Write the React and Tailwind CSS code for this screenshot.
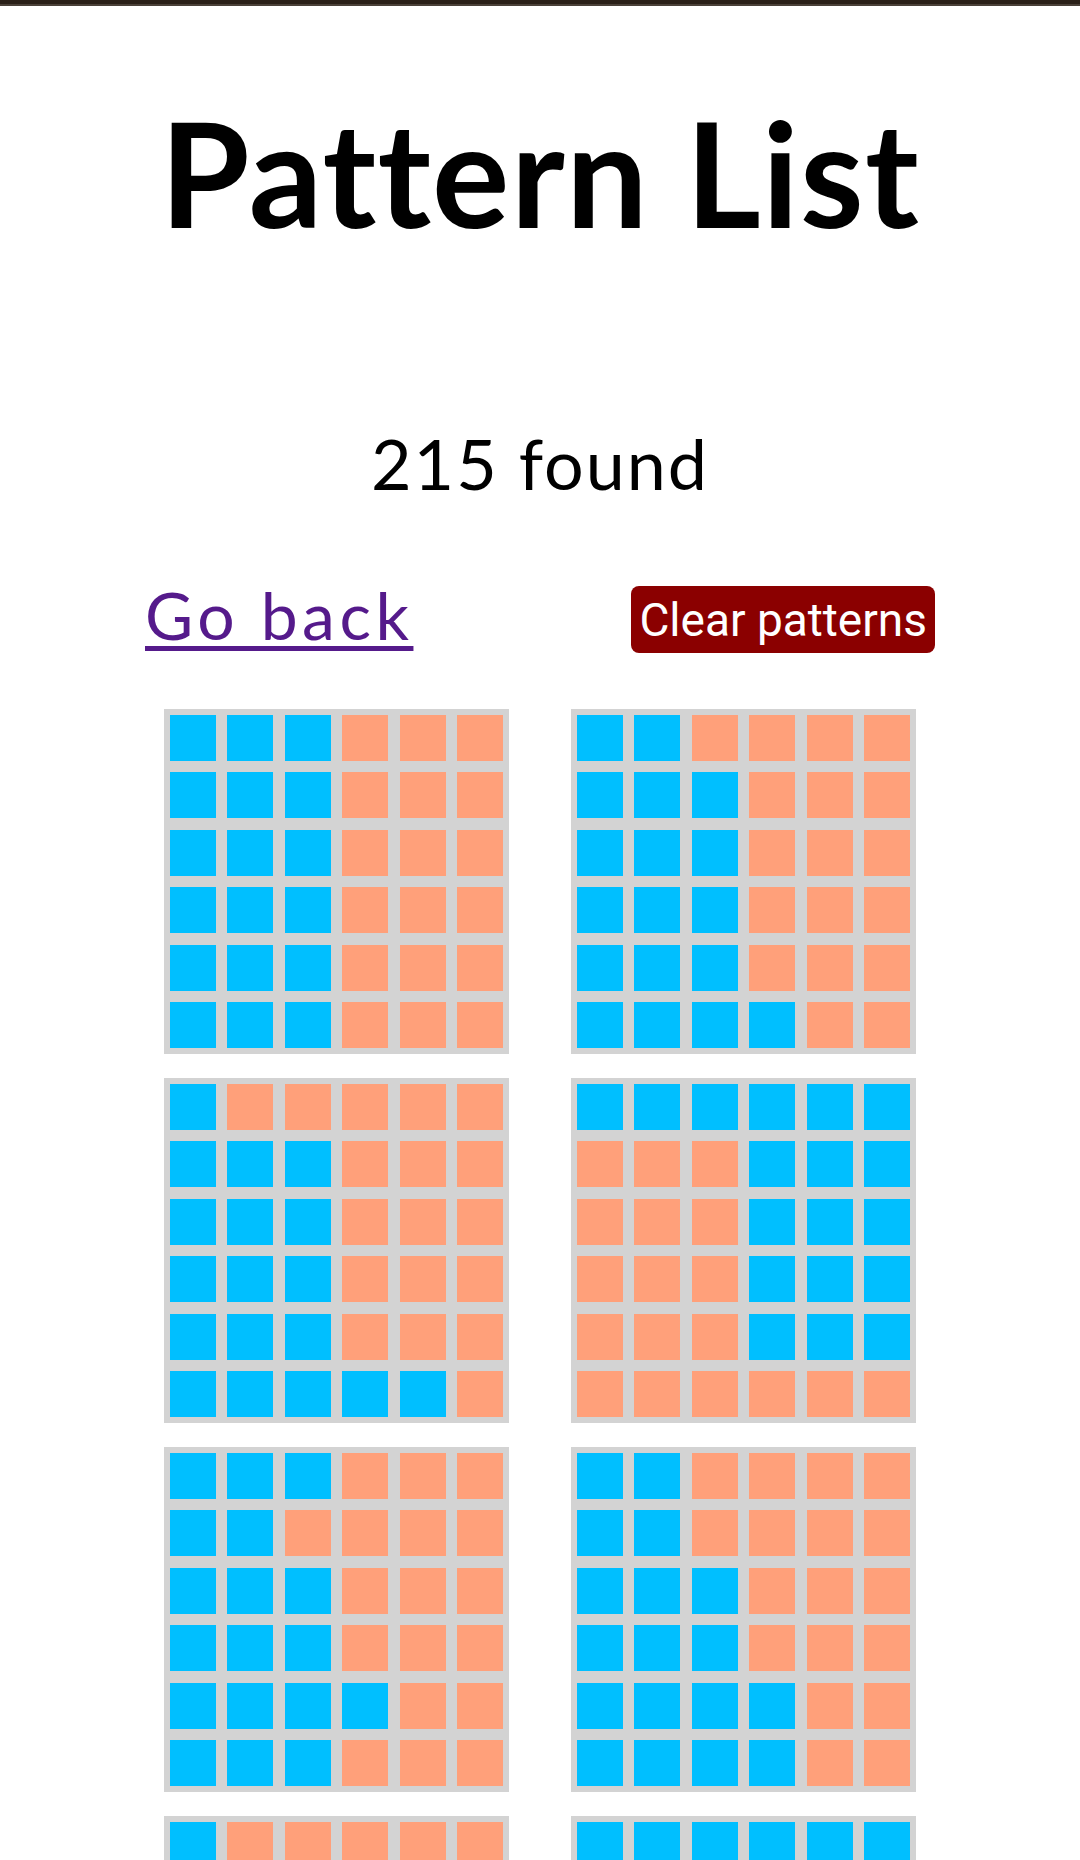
import React from "react";

const B = "bg-[#00bfff]";
const O = "bg-[#ffa07a]";

const patterns = [
  ["BBBOOO", "BBBOOO", "BBBOOO", "BBBOOO", "BBBOOO", "BBBOOO"],
  ["BBOOOO", "BBBOOO", "BBBOOO", "BBBOOO", "BBBOOO", "BBBBOO"],
  ["BOOOOO", "BBBOOO", "BBBOOO", "BBBOOO", "BBBOOO", "BBBBBO"],
  ["BBBBBB", "OOOBBB", "OOOBBB", "OOOBBB", "OOOBBB", "OOOOOO"],
  ["BBBOOO", "BBOOOO", "BBBOOO", "BBBOOO", "BBBBOO", "BBBOOO"],
  ["BBOOOO", "BBOOOO", "BBBOOO", "BBBOOO", "BBBBOO", "BBBBOO"],
  ["BOOOOO", "BBBOOO", "BBBOOO", "BBBOOO", "BBBOOO", "BBBBBO"],
  ["BBBBBB", "OOOBBB", "OOOBBB", "OOOBBB", "OOOBBB", "OOOOOO"],
];

function Pattern({ rows }) {
  return (
    <div className="grid grid-cols-6 gap-[11.5px] p-[5.75px] bg-[#d3d3d3] w-[345px] h-[345px]">
      {rows.flatMap((r, i) =>
        r.split("").map((c, j) => (
          <div key={i + "-" + j} className={"w-[46px] h-[46px] " + (c === "B" ? B : O)} />
        ))
      )}
    </div>
  );
}

export default function App() {
  return (
    <div className="w-[1080px] h-[1860px] overflow-hidden bg-white font-['Lato',sans-serif] text-black">
      <div className="h-[4px] bg-[#2a2018]" />
      <div className="h-[2px] bg-[#4a4038]" />
      <h1 className="text-center font-bold text-[145px] leading-none tracking-[1.2px] pt-[94px]">
        Pattern List
      </h1>
      <p className="text-center text-[70px] leading-none tracking-[2px] mt-[183px]">215 found</p>
      <div className="w-[790px] mx-auto mt-[88px] flex items-start justify-between">
        <a
          href="#"
          className="text-[#551a8b] text-[66px] leading-[58px] tracking-[4.5px] underline decoration-[5px] underline-offset-[6px]"
        >
          Go back
        </a>
        <button className="bg-[#8b0000] text-white font-['Roboto',sans-serif] text-[46px] leading-[54px] px-[8px] py-[6.5px] rounded-[8px]">
          Clear patterns
        </button>
      </div>
      <div className="grid grid-cols-[345px_345px] justify-center gap-x-[62px] gap-y-[24px] mt-[56px]">
        {patterns.map((p, i) => (
          <Pattern key={i} rows={p} />
        ))}
      </div>
    </div>
  );
}
